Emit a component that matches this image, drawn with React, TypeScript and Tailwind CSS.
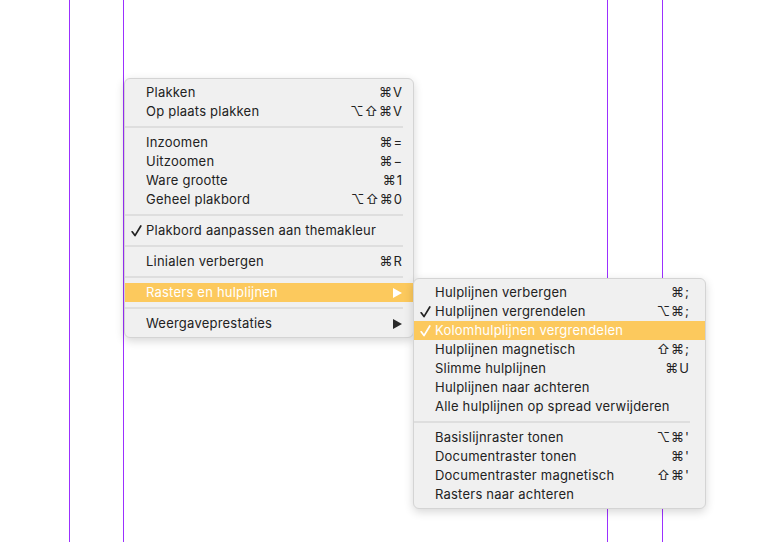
import React from 'react'

type Item =
  | { sep: true }
  | { label: string; shortcut?: string; checked?: boolean; active?: boolean; submenu?: boolean; sep?: false }

const mainMenu: Item[] = [
  { label: 'Plakken', shortcut: '⌘V' },
  { label: 'Op plaats plakken', shortcut: '⌥⇧⌘V' },
  { sep: true },
  { label: 'Inzoomen', shortcut: '⌘=' },
  { label: 'Uitzoomen', shortcut: '⌘−' },
  { label: 'Ware grootte', shortcut: '⌘1' },
  { label: 'Geheel plakbord', shortcut: '⌥⇧⌘0' },
  { sep: true },
  { label: 'Plakbord aanpassen aan themakleur', checked: true },
  { sep: true },
  { label: 'Linialen verbergen', shortcut: '⌘R' },
  { sep: true },
  { label: 'Rasters en hulplijnen', submenu: true, active: true },
  { sep: true },
  { label: 'Weergaveprestaties', submenu: true },
]

const subMenu: Item[] = [
  { label: 'Hulplijnen verbergen', shortcut: '⌘;' },
  { label: 'Hulplijnen vergrendelen', shortcut: '⌥⌘;', checked: true },
  { label: 'Kolomhulplijnen vergrendelen', checked: true, active: true },
  { label: 'Hulplijnen magnetisch', shortcut: '⇧⌘;' },
  { label: 'Slimme hulplijnen', shortcut: '⌘U' },
  { label: 'Hulplijnen naar achteren' },
  { label: 'Alle hulplijnen op spread verwijderen' },
  { sep: true },
  { label: 'Basislijnraster tonen', shortcut: "⌥⌘'" },
  { label: 'Documentraster tonen', shortcut: "⌘'" },
  { label: 'Documentraster magnetisch', shortcut: "⇧⌘'" },
  { label: 'Rasters naar achteren' },
]

function Menu({ items, className }: { items: Item[]; className: string }) {
  return (
    <div
      className={`absolute rounded-[6px] border border-[#d4d4d4] bg-[#f0f0f0] pt-[4px] pb-[4px] shadow-[0_3px_10px_rgba(0,0,0,0.16)] ${className}`}
    >
      {items.map((item, i) =>
        item.sep ? (
          <div key={i} className="flex h-[12px] items-center">
            <div className="h-[2px] w-full bg-[#dedede]" />
          </div>
        ) : (
          <div
            key={i}
            className={`relative flex h-[19px] items-center pl-[21px] text-[13px] leading-none ${
              item.active ? 'bg-[#fcc95d] text-white' : 'text-[#222222]'
            }`}
          >
            {item.checked && (
              // checkmark
              <svg width="11" height="12" viewBox="0 0 11 12" className="absolute left-[6px] top-[4px]">
                <path
                  d="M1.2 6.8L4 10.6L9.8 1"
                  fill="none"
                  stroke={item.active ? '#ffffff' : '#222222'}
                  strokeWidth="1.7"
                  strokeLinecap="round"
                  strokeLinejoin="round"
                />
              </svg>
            )}
            <span className="flex-1 whitespace-nowrap tracking-[0.22px]">{item.label}</span>
            {item.shortcut && (
              <span className="whitespace-nowrap tracking-[1px]">{item.shortcut}</span>
            )}
            {item.submenu && (
              <svg width="9" height="10" viewBox="0 0 9 10" className="mr-[1px]">
                <path d="M0 0L9 5L0 10Z" fill={item.active ? '#ffffff' : '#2a2a2a'} />
              </svg>
            )}
          </div>
        )
      )}
    </div>
  )
}

export default function App() {
  return (
    <div className="relative h-[542px] w-[782px] overflow-hidden bg-white font-['Inter','DejaVu_Sans',sans-serif]">
      {/* guide lines */}
      <div className="absolute left-[69px] top-0 h-full w-px bg-[#9b30ff]" />
      <div className="absolute left-[123px] top-0 h-full w-px bg-[#9b30ff]" />
      <div className="absolute left-[607px] top-0 h-full w-px bg-[#9b30ff]" />
      <div className="absolute left-[662px] top-0 h-full w-px bg-[#9b30ff]" />

      <Menu items={mainMenu} className="left-[124px] top-[78px] w-[290px] [&>div]:pr-[10px]" />
      <Menu items={subMenu} className="left-[413px] top-[278px] w-[293px] [&>div]:pr-[15px]" />
    </div>
  )
}
